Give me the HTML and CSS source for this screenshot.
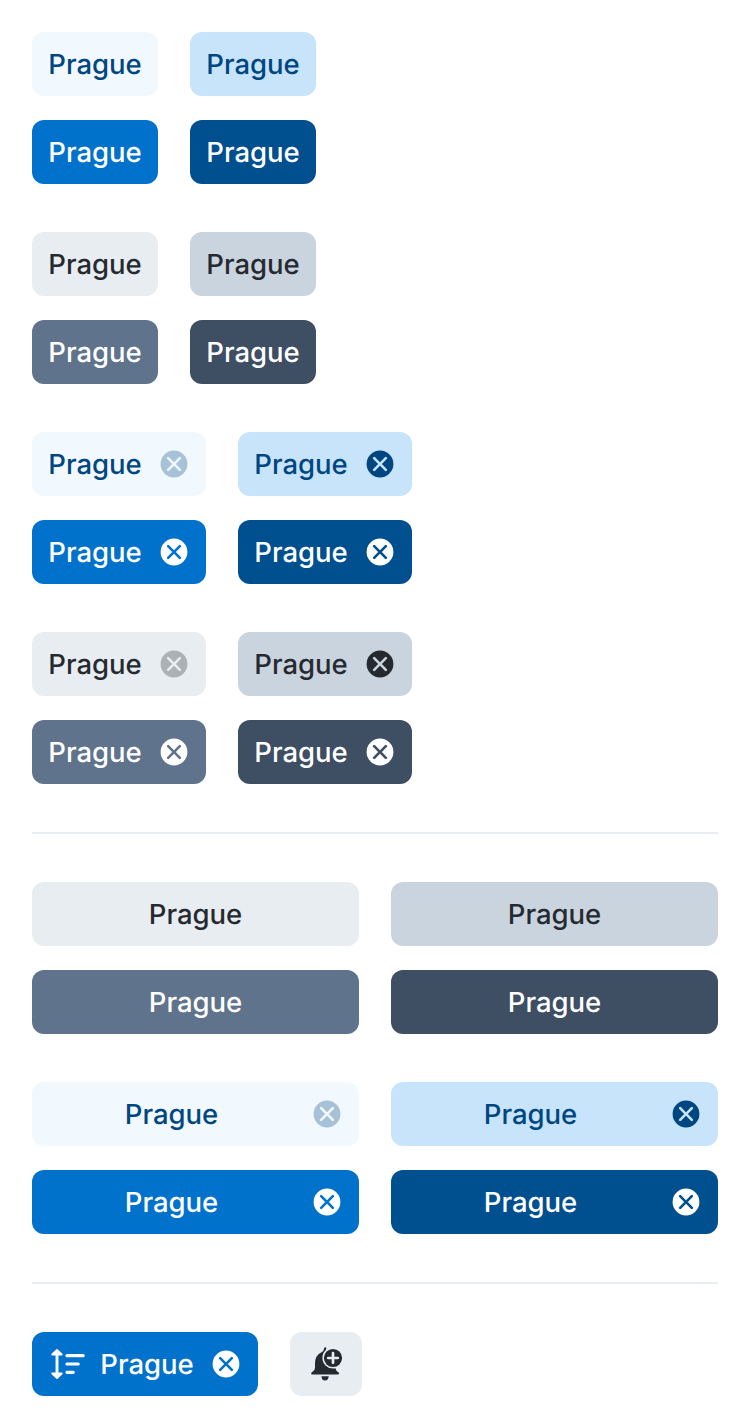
FILE: index.html
```
<!DOCTYPE html>
<html lang="en">
<head>
<meta charset="utf-8">
<title>Tags</title>
<link rel="stylesheet" href="styles.css">
</head>
<body>
<svg class="defs" aria-hidden="true">
  <symbol id="close" viewBox="0 0 32 32">
    <path fill="currentColor" fill-rule="evenodd" d="M16 2.6a13.4 13.4 0 1 0 0 26.8a13.4 13.4 0 1 0 0-26.8zM16 14.15l4.9-4.9a1.3 1.3 0 0 1 1.85 1.85L17.85 16l4.9 4.9a1.3 1.3 0 0 1-1.85 1.85L16 17.85l-4.9 4.9a1.3 1.3 0 0 1-1.85-1.85l4.9-4.9l-4.9-4.9a1.3 1.3 0 0 1 1.85-1.85z"/>
  </symbol>
  <symbol id="sort" viewBox="0 0 40 40">
    <path fill="currentColor" stroke="currentColor" stroke-width="1.8" stroke-linejoin="round" d="M9 5.9L13.8 10.5H4.2zM9 34.1L13.8 29.5H4.2z"/>
    <path fill="none" stroke="currentColor" stroke-width="2.9" d="M9 10v20"/>
    <path fill="none" stroke="currentColor" stroke-width="3.2" stroke-linecap="round" d="M19 11.7h16.2M19 20h11.2M19 28.3h6.2"/>
  </symbol>
  <symbol id="bell" viewBox="0 0 40 40">
    <path fill="currentColor" d="M18 4.7Q18.1 3.3 19.3 3.3Q20.6 3.4 20.3 4.8L19.8 6.1Q16.4 9.3 16.4 14A10.6 10.6 0 0 0 27 24.6Q28.3 24.6 29.5 24.3Q29.8 26.4 31.5 27.7Q33.2 28.4 33.1 29.5Q33 30.6 31.8 30.6H6.6Q5.2 30.6 5.2 29.4Q5.2 28.4 6.5 27.8Q9 26.6 9 23.5V19.5Q9 11.2 15.6 8.2Q17.8 7.3 18 4.7zM15.4 32.2H22.7Q22.4 36.4 19.05 36.4Q15.7 36.4 15.4 32.2z"/>
    <circle cx="27" cy="14" r="9.1" fill="currentColor"/>
    <path class="plus" stroke-width="2.7" stroke-linecap="round" d="M27 9.2v9.6M22.2 14h9.6"/>
  </symbol>
</svg>
<main class="page">
  <section class="group">
    <div class="row"><span class="tag info-subtle"><span class="label">Prague</span></span><span class="tag info-light"><span class="label">Prague</span></span></div>
    <div class="row"><span class="tag info"><span class="label">Prague</span></span><span class="tag info-dark"><span class="label">Prague</span></span></div>
  </section>
  <section class="group">
    <div class="row"><span class="tag gray-subtle"><span class="label">Prague</span></span><span class="tag gray-light"><span class="label">Prague</span></span></div>
    <div class="row"><span class="tag gray"><span class="label">Prague</span></span><span class="tag gray-dark"><span class="label">Prague</span></span></div>
  </section>
  <section class="group">
    <div class="row">
      <span class="tag info-subtle"><span class="label">Prague</span><svg class="close"><use href="#close"/></svg></span>
      <span class="tag info-light"><span class="label">Prague</span><svg class="close"><use href="#close"/></svg></span>
    </div>
    <div class="row">
      <span class="tag info"><span class="label">Prague</span><svg class="close"><use href="#close"/></svg></span>
      <span class="tag info-dark"><span class="label">Prague</span><svg class="close"><use href="#close"/></svg></span>
    </div>
  </section>
  <section class="group">
    <div class="row">
      <span class="tag gray-subtle"><span class="label">Prague</span><svg class="close"><use href="#close"/></svg></span>
      <span class="tag gray-light"><span class="label">Prague</span><svg class="close"><use href="#close"/></svg></span>
    </div>
    <div class="row">
      <span class="tag gray"><span class="label">Prague</span><svg class="close"><use href="#close"/></svg></span>
      <span class="tag gray-dark"><span class="label">Prague</span><svg class="close"><use href="#close"/></svg></span>
    </div>
  </section>
  <hr class="divider">
  <section class="group">
    <div class="row fill"><span class="tag gray-subtle"><span class="label">Prague</span></span><span class="tag gray-light"><span class="label">Prague</span></span></div>
    <div class="row fill"><span class="tag gray"><span class="label">Prague</span></span><span class="tag gray-dark"><span class="label">Prague</span></span></div>
  </section>
  <section class="group">
    <div class="row fill">
      <span class="tag info-subtle"><span class="label">Prague</span><svg class="close"><use href="#close"/></svg></span>
      <span class="tag info-light"><span class="label">Prague</span><svg class="close"><use href="#close"/></svg></span>
    </div>
    <div class="row fill">
      <span class="tag info"><span class="label">Prague</span><svg class="close"><use href="#close"/></svg></span>
      <span class="tag info-dark"><span class="label">Prague</span><svg class="close"><use href="#close"/></svg></span>
    </div>
  </section>
  <hr class="divider">
  <section class="group">
    <div class="row">
      <span class="tag info"><svg class="icon lead"><use href="#sort"/></svg><span class="label">Prague</span><svg class="close"><use href="#close"/></svg></span>
      <span class="tag gray-subtle"><svg class="icon"><use href="#bell"/></svg></span>
    </div>
  </section>
</main>
</body>
</html>
```
FILE: styles.css
```
* { box-sizing: border-box; }
body {
  margin: 0;
  background: #fff;
  font: 500 27.5px/32px Inter, "Liberation Sans", sans-serif;
  text-rendering: geometricPrecision;
}
.defs { position: absolute; width: 0; height: 0; }
.page {
  display: flex;
  flex-direction: column;
  gap: 48px;
  padding: 32px;
}
.group { display: flex; flex-direction: column; gap: 24px; }
.row { display: flex; gap: 32px; }
.tag {
  display: flex;
  align-items: center;
  justify-content: center;
  height: 64px;
  padding: 0 16px;
  border-radius: 12px;
}
.label {
  flex: 1 0 auto;
  width: 94px;
  text-align: center;
  white-space: nowrap;
}
.fill .tag { flex: 1; }
.close { flex: none; width: 32px; height: 32px; margin-left: 16px; }
.icon { flex: none; width: 40px; height: 40px; }
.lead { margin-right: 12px; }
.plus { fill: none; stroke: #e8edf1; }
.divider { width: 100%; height: 2px; margin: 0; border: 0; background: #e8edf1; }

.info-subtle { background: #f1f8fe; color: #004680; }
.info-light { background: #c7e4fa; color: #004680; }
.info { background: #0172cb; color: #fff; }
.info-dark { background: #004f8f; color: #fff; }
.gray-subtle { background: #e8edf1; color: #252a31; }
.gray-light { background: #cad4de; color: #252a31; }
.gray { background: #5f738c; color: #fff; }
.gray-dark { background: #3e4e63; color: #fff; }
.info-subtle .close { opacity: .3; }
.gray-subtle .close { opacity: .3; }
```
